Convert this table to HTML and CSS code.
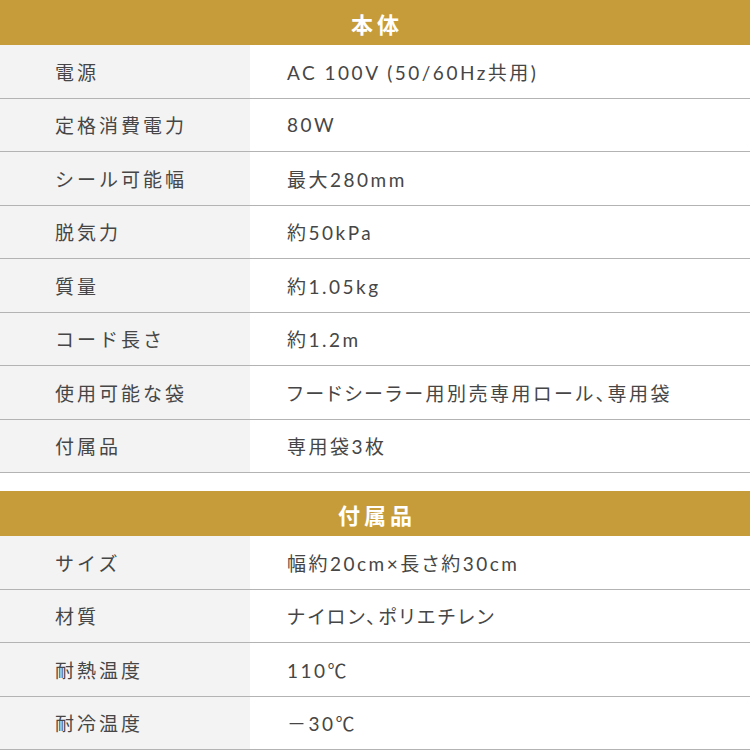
FILE: index.html
```html
<!DOCTYPE html>
<html lang="ja">
<head>
<meta charset="utf-8">
<link rel="stylesheet" href="styles.css">
</head>
<body>
<section class="spec">
  <h2 class="spec-head">本体</h2>
  <div class="row"><div class="label">電源</div><div class="value">AC 100V (50/60Hz共用)</div></div>
  <div class="row"><div class="label">定格消費電力</div><div class="value">80W</div></div>
  <div class="row"><div class="label">シール可能幅</div><div class="value">最大280mm</div></div>
  <div class="row"><div class="label">脱気力</div><div class="value">約50kPa</div></div>
  <div class="row"><div class="label">質量</div><div class="value">約1.05kg</div></div>
  <div class="row"><div class="label">コード長さ</div><div class="value">約1.2m</div></div>
  <div class="row"><div class="label">使用可能な袋</div><div class="value">フードシーラー用別売専用ロール、専用袋</div></div>
  <div class="row"><div class="label">付属品</div><div class="value">専用袋3枚</div></div>
</section>
<section class="spec spec-second">
  <h2 class="spec-head">付属品</h2>
  <div class="row"><div class="label">サイズ</div><div class="value">幅約20cm×長さ約30cm</div></div>
  <div class="row"><div class="label">材質</div><div class="value">ナイロン、ポリエチレン</div></div>
  <div class="row"><div class="label">耐熱温度</div><div class="value">110℃</div></div>
  <div class="row"><div class="label">耐冷温度</div><div class="value">－30℃</div></div>
</section>
</body>
</html>
```
FILE: styles.css
```css
html, body {
  margin: 0;
  padding: 0;
  background: #ffffff;
}
body {
  width: 750px;
  font-family: "Noto Sans CJK JP", "Noto Sans", sans-serif;
  color: #464646;
}
.spec {
  display: flex;
  flex-direction: column;
}
.spec-second {
  margin-top: 18px;
}
.spec-head {
  margin: 0;
  height: 45px;
  background: #c69c3a;
  color: #ffffff;
  font-size: 22px;
  font-weight: 700;
  letter-spacing: 4px;
  display: flex;
  align-items: center;
  justify-content: center;
  padding-left: 4px;
}
.row {
  display: grid;
  grid-template-columns: 250px 1fr;
  height: 53.5px;
  box-sizing: border-box;
  border-bottom: 1px solid #b3b3b3;
}
.label {
  background: #f3f3f3;
  display: flex;
  align-items: center;
  padding-left: 55px;
  font-size: 19px;
  letter-spacing: 3px;
}
.value {
  display: flex;
  align-items: center;
  padding-left: 37px;
  font-family: Lato, "Noto Sans CJK JP", sans-serif;
  font-size: 19px;
  letter-spacing: 2.5px;
  font-feature-settings: "palt";
}
```
